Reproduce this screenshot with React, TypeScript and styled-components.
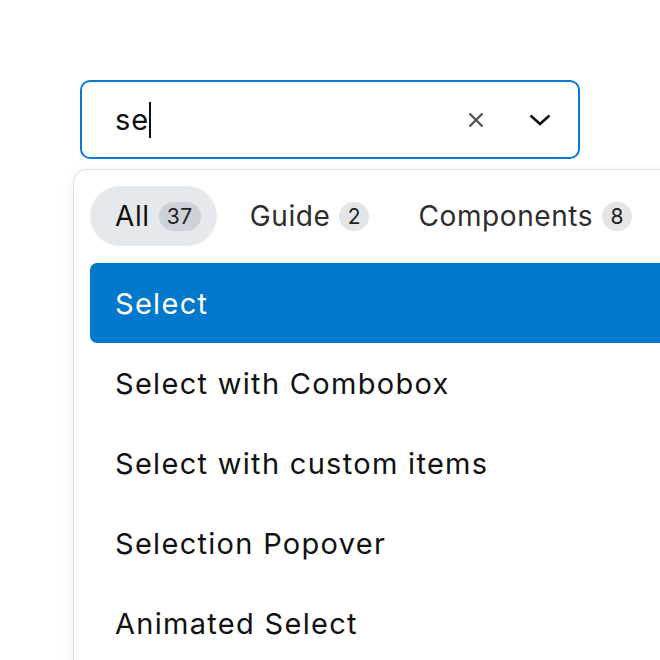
import React from "react";
import styled, { createGlobalStyle } from "styled-components";

const Global = createGlobalStyle`
  html, body { margin: 0; padding: 0; background: #fff; overflow: hidden; }
  body { font-family: Inter, "Noto Sans", sans-serif; }
  * { box-sizing: border-box; }
`;

const Page = styled.div`
  width: 660px;
  height: 660px;
  overflow: hidden;
  padding: 80px 0 0 73px;
`;

const Combobox = styled.div`
  margin-left: 7px;
  width: 500px;
  height: 79px;
  border: 2px solid #0a79cf;
  border-radius: 10px;
  display: flex;
  align-items: center;
  padding: 0 18px 0 33px;
  background: #fff;
  box-shadow: inset 0 2px 3px rgba(0, 0, 0, 0.04);
`;

const InputText = styled.div`
  flex: 1;
  display: flex;
  align-items: center;
  font-size: 29px;
  color: #111;
  letter-spacing: 1px;
`;

const Caret = styled.span`
  display: inline-block;
  width: 2px;
  height: 36px;
  background: #111;
`;

const IconButton = styled.button<{ $gap?: number }>`
  border: none;
  background: transparent;
  padding: 0;
  width: 40px;
  height: 40px;
  display: flex;
  align-items: center;
  justify-content: center;
  margin-left: ${(p) => p.$gap ?? 0}px;
`;

const Popover = styled.div`
  margin-top: 10px;
  width: 640px;
  height: 520px;
  border: 1px solid #dde1e6;
  border-right: none;
  border-radius: 14px 0 0 0;
  padding: 16px 0 0 16px;
  background: #fff;
  box-shadow: 0 4px 16px rgba(0, 0, 0, 0.06);
`;

const Tabs = styled.div`
  display: flex;
  gap: 8px;
  height: 60px;
  margin-bottom: 17px;
`;

const Tab = styled.div<{ $active?: boolean }>`
  display: flex;
  align-items: center;
  gap: 9px;
  height: 60px;
  padding: 0 16px 0 25px;
  border-radius: 30px;
  background: ${(p) => (p.$active ? "#e5e9ed" : "transparent")};
  color: ${(p) => (p.$active ? "#111" : "#2d2d2d")};
  font-size: 28px;
  letter-spacing: 0.6px;
  white-space: nowrap;
`;

const Badge = styled.span<{ $active?: boolean }>`
  display: inline-flex;
  align-items: center;
  justify-content: center;
  min-width: 30px;
  height: 29px;
  padding: 0 8px;
  border-radius: 15px;
  background: ${(p) => (p.$active ? "#cdd2d8" : "#e4e5e7")};
  color: #222;
  font-size: 21px;
  letter-spacing: 0.6px;
`;

const List = styled.div`
  display: flex;
  flex-direction: column;
`;

const Item = styled.div<{ $selected?: boolean }>`
  height: 80px;
  display: flex;
  align-items: center;
  padding-left: 25px;
  border-radius: 7px;
  font-size: 29px;
  letter-spacing: 1.3px;
  background: ${(p) => (p.$selected ? "#0079cc" : "transparent")};
  color: ${(p) => (p.$selected ? "#fff" : "#111")};
  white-space: nowrap;
`;

const tabs = [
  { label: "All", count: 37, active: true },
  { label: "Guide", count: 2 },
  { label: "Components", count: 8 },
];

const items = [
  "Select",
  "Select with Combobox",
  "Select with custom items",
  "Selection Popover",
  "Animated Select",
];

export default function App() {
  return (
    <>
      <Global />
      <Page>
        <Combobox>
          <InputText>
            se
            <Caret />
          </InputText>
          <IconButton aria-label="Clear">
            <svg width="16" height="16" viewBox="0 0 16 16">
              <path d="M1.5 1.5 L14.5 14.5 M14.5 1.5 L1.5 14.5" stroke="#555" strokeWidth="2.4" />
            </svg>
          </IconButton>
          <IconButton aria-label="Open" $gap={24}>
            <svg width="22" height="14" viewBox="0 0 22 14">
              <path d="M1.5 2.5 L11 11 L20.5 2.5" stroke="#111" strokeWidth="2.6" fill="none" />
            </svg>
          </IconButton>
        </Combobox>
        <Popover>
          <Tabs>
            {tabs.map((t) => (
              <Tab key={t.label} $active={t.active}>
                {t.label}
                <Badge $active={t.active}>{t.count}</Badge>
              </Tab>
            ))}
          </Tabs>
          <List>
            {items.map((it, i) => (
              <Item key={it} $selected={i === 0}>
                {it}
              </Item>
            ))}
          </List>
        </Popover>
      </Page>
    </>
  );
}
